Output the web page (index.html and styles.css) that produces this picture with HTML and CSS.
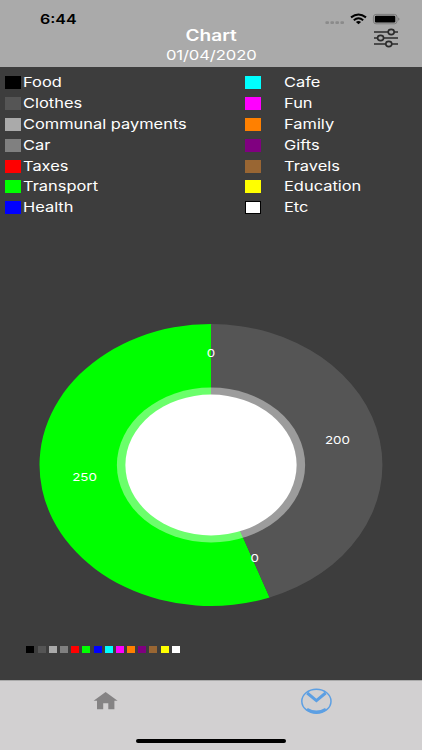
FILE: index.html
```html
<!DOCTYPE html>
<html lang="en">
<head>
    <meta charset="UTF-8">
    <title>Chart</title>
    <link rel="stylesheet" href="styles.css">
</head>
<body>
    <div class="app">
        <header class="header">
            <div class="time"><span class="wide">6:44</span></div>
            <div class="heading">
                <h1 class="wide">Chart</h1>
                <p class="wide">01/04/2020</p>
            </div>
            <div class="header-right">
                <svg class="status" width="78" height="14" viewBox="0 0 78 14">
                    <g fill="#8b8b8b">
                        <rect x="2.4" y="9.2" width="3.6" height="2.8" rx="1"/>
                        <rect x="7.4" y="9.2" width="3.6" height="2.8" rx="1"/>
                        <rect x="12.4" y="9.2" width="3.6" height="2.8" rx="1"/>
                        <rect x="17.4" y="9.2" width="3.6" height="2.8" rx="1"/>
                    </g>
                    <g fill="none" stroke="#000" stroke-width="2">
                        <path d="M28 5.4 Q35.5 -0.4 43 5.4"/>
                        <path d="M30.8 8.2 Q35.5 4.4 40.2 8.2"/>
                    </g>
                    <path d="M32.9 9.9 Q35.5 8 38.1 9.9 L35.5 12.2 Z"/>
                    <rect x="50.4" y="2.4" width="23.6" height="9.4" rx="2.6" fill="none" stroke="#777" stroke-width="0.9"/>
                    <rect x="51.9" y="3.7" width="20.4" height="6.8" rx="1.2"/>
                    <path d="M75.2 5.5 Q77.8 7.1 75.2 8.7 Z" fill="#777"/>
                </svg>
                <svg class="filter" width="26" height="20" viewBox="0 0 26 20">
                    <g fill="#aaa" stroke="#2b2b2b" stroke-width="1.6">
                        <path d="M1 4H25M1 10H25M1 16H25"/>
                        <ellipse cx="18.2" cy="4" rx="3" ry="2.6"/>
                        <ellipse cx="7.6" cy="10" rx="3" ry="2.6"/>
                        <ellipse cx="15.8" cy="16" rx="3" ry="2.6"/>
                    </g>
                </svg>
            </div>
        </header>

        <main class="content">
            <div class="legend">
                <ul class="legend-left">
                    <li><i class="swatch food"></i><span class="wide">Food</span></li>
                    <li><i class="swatch clothes"></i><span class="wide">Clothes</span></li>
                    <li><i class="swatch communal"></i><span class="wide">Communal payments</span></li>
                    <li><i class="swatch car"></i><span class="wide">Car</span></li>
                    <li><i class="swatch taxes"></i><span class="wide">Taxes</span></li>
                    <li><i class="swatch transport"></i><span class="wide">Transport</span></li>
                    <li><i class="swatch health"></i><span class="wide">Health</span></li>
                </ul>
                <ul class="legend-right">
                    <li><i class="swatch cafe"></i><span class="wide">Cafe</span></li>
                    <li><i class="swatch fun"></i><span class="wide">Fun</span></li>
                    <li><i class="swatch family"></i><span class="wide">Family</span></li>
                    <li><i class="swatch gifts"></i><span class="wide">Gifts</span></li>
                    <li><i class="swatch travels"></i><span class="wide">Travels</span></li>
                    <li><i class="swatch education"></i><span class="wide">Education</span></li>
                    <li><i class="swatch etc"></i><span class="wide">Etc</span></li>
                </ul>
            </div>

            <svg class="pie" width="344" height="284" viewBox="-172 -142 344 284">
                <g transform="scale(1.216 1)">
                    <path d="M0 0L48.2 132.5A141 141 0 1 1 0 -141Z" fill="#0f0"/>
                    <path d="M0 0V-141A141 141 0 0 1 48.2 132.5Z" fill="#555"/>
                    <circle r="77.4" fill="#fff" fill-opacity="0.42"/>
                    <circle r="70.4" fill="#fff"/>
                    <g class="values">
                        <text x="0" y="-108">0</text>
                        <text x="104" y="-20.6">200</text>
                        <text x="36" y="97">0</text>
                        <text x="-104" y="15.8">250</text>
                    </g>
                </g>
            </svg>

            <div class="mini-legend">
                <i class="food"></i>
                <i class="clothes"></i>
                <i class="communal"></i>
                <i class="car"></i>
                <i class="taxes"></i>
                <i class="transport"></i>
                <i class="health"></i>
                <i class="cafe"></i>
                <i class="fun"></i>
                <i class="family"></i>
                <i class="gifts"></i>
                <i class="travels"></i>
                <i class="education"></i>
                <i class="etc"></i>
            </div>
        </main>

        <nav class="tabs">
            <a class="tab">
                <svg width="26" height="20" viewBox="0 0 26 20">
                    <path d="M12.6 1L24.6 9.8H21.4V18.3H15.3V12.3H10.2V18.3H4V9.8H0.6Z" fill="#858384"/>
                </svg>
            </a>
            <a class="tab">
                <svg width="32" height="27" viewBox="0 0 32 27" fill="none" stroke="#5c9fe3">
                    <ellipse cx="15.4" cy="13.2" rx="14.6" ry="12" stroke-width="1.5"/>
                    <path d="M6.2 5L15.4 12.6L24.6 5" stroke-width="3"/>
                    <path d="M6 21.2Q15.4 26.6 24.8 21.2" stroke-width="2.8"/>
                </svg>
            </a>
            <div class="home-indicator"></div>
        </nav>
    </div>
</body>
</html>
```
FILE: styles.css
```css
* {
    margin: 0;
    padding: 0;
    box-sizing: border-box;
}

body {
    font-family: Inter, Roboto, sans-serif;
    background: #3d3d3d;
    color: white;
}

.app {
    width: 422px;
    height: 750px;
    display: flex;
    flex-direction: column;
    overflow: hidden;
}

/* letters are wider than they are tall all over the screen */
.wide {
    display: inline-block;
    transform: scaleX(1.216);
    transform-origin: left center;
    white-space: nowrap;
}

/* Header */
.header {
    height: 67px;
    flex: none;
    display: grid;
    grid-template-columns: 1fr 140px 1fr;
    background: #aaa;
}

.time {
    padding: 11px 0 0 40px;
    font-size: 13.2px;
    line-height: 17px;
    font-weight: 600;
    color: black;
}

.heading {
    display: flex;
    flex-direction: column;
    align-items: center;
    padding-top: 26px;
}

.heading .wide {
    transform-origin: center;
}

.heading h1 {
    font-size: 15.7px;
    line-height: 19px;
    font-weight: 600;
}

.heading p {
    font-size: 13.7px;
    line-height: 21px;
    letter-spacing: -0.1px;
}

.header-right {
    display: flex;
    flex-direction: column;
    align-items: flex-end;
    padding-top: 12px;
}

.status {
    margin-right: 21px;
}

.filter {
    margin: 2px 23px 0 0;
}

/* Content */
.content {
    flex: 1;
    display: flex;
    flex-direction: column;
}

.legend {
    display: flex;
    padding: 5px 0 0 5px;
    font-size: 13.5px;
    line-height: 21px;
}

.legend ul {
    list-style: none;
}

.legend-left {
    width: 240.4px;
}

.legend li {
    display: flex;
    align-items: center;
    height: 20.9px;
}

.swatch {
    width: 16px;
    height: 13px;
    margin-right: 2.2px;
}

.legend-right .swatch {
    margin-right: 22.5px;
}

.food { background: #000; }
.clothes { background: #555; }
.communal { background: #aaa; }
.car { background: #808080; }
.taxes { background: #f00; }
.transport { background: #0f0; }
.health { background: #00f; }
.cafe { background: #0ff; }
.fun { background: #f0f; }
.family { background: #ff8000; }
.gifts { background: #800080; }
.travels { background: #996633; }
.education { background: #ff0; }
.etc { background: #fff; }

.swatch.etc {
    border: 1px solid #000;
}

.pie {
    margin: 105px auto 0;
}

.values {
    fill: white;
    font-size: 11px;
    text-anchor: middle;
}

.mini-legend {
    display: flex;
    gap: 3.2px;
    padding: 39px 0 0 26.4px;
}

.mini-legend i {
    width: 8px;
    height: 7px;
}

/* Tab bar */
.tabs {
    position: relative;
    height: 70px;
    flex: none;
    display: flex;
    background: #d2d0d1;
    border-top: 1px solid #aaa;
}

.tab {
    flex: 1;
    display: flex;
    justify-content: center;
    align-items: center;
    height: 40px;
}

.home-indicator {
    position: absolute;
    left: 136px;
    bottom: 7px;
    width: 150px;
    height: 4px;
    border-radius: 2px;
    background: black;
}
```
